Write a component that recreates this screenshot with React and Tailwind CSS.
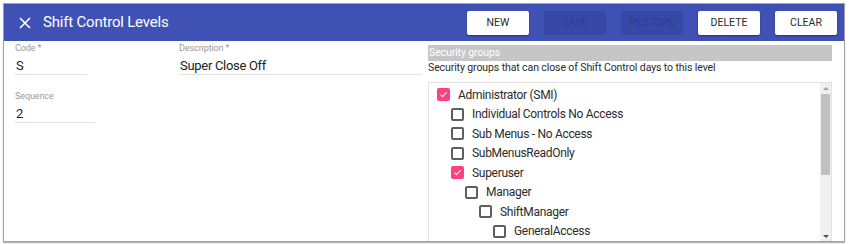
import React from "react";

const rows = [
  { label: "Administrator (SMI)", level: 0, checked: true },
  { label: "Individual Controls No Access", level: 1 },
  { label: "Sub Menus - No Access", level: 1 },
  { label: "SubMenusReadOnly", level: 1 },
  { label: "Superuser", level: 1, checked: true },
  { label: "Manager", level: 2 },
  { label: "ShiftManager", level: 3 },
  { label: "GeneralAccess", level: 4 },
];

function Checkbox({ checked }) {
  if (checked) {
    return (
      <div className="w-[13px] h-[13px] rounded-[2px] bg-[#ff4081] flex items-center justify-center shrink-0">
        <svg width="9" height="9" viewBox="0 0 10 10">
          <path d="M1.8 5.2 L4 7.3 L8.3 2.6" fill="none" stroke="white" strokeWidth="1.2" />
        </svg>
      </div>
    );
  }
  return <div className="w-[13px] h-[13px] rounded-[2px] border-2 border-[#5f5f5f] shrink-0" />;
}

const indents = ["pl-[8px]", "pl-[22px]", "pl-[36px]", "pl-[50px]", "pl-[64px]"];

function Field({ label, value, width, className = "" }) {
  return (
    <div className={`${width} ${className}`}>
      <div className="text-[9px] leading-[11px] text-[#9a9a9a] tracking-[-0.1px]">{label}</div>
      <div className="mt-[4px] text-[13px] leading-[16px] text-[#222] border-b border-[#e2e2e2] pl-[1px] tracking-[-0.3px]">
        {value}
      </div>
    </div>
  );
}

function Btn({ children, disabled }) {
  return disabled ? (
    <div className="w-[62px] h-[24px] rounded-[2px] bg-[#3848a6] flex items-center justify-center text-[10.5px] text-[#2e3c93] uppercase">
      {children}
    </div>
  ) : (
    <div className="w-[62px] h-[24px] rounded-[2px] bg-white shadow-[0_1px_2px_rgba(0,0,0,0.35)] flex items-center justify-center text-[10.5px] text-[#2a2a2a] uppercase">
      {children}
    </div>
  );
}

export default function App() {
  return (
    <div
      className="w-[849px] h-[244px] bg-white pt-[3px] pl-[3px] pr-[4px] pb-[2px]"
      style={{ fontFamily: "Roboto, 'Liberation Sans', sans-serif" }}
    >
      <div className="h-full border border-[#a3a3a3] shadow-[0_1px_1px_rgba(0,0,0,0.3)] flex flex-col overflow-hidden">
        <div className="h-[37px] bg-[#3f51b5] flex items-center pl-[15px] pr-[7px] shrink-0">
          <svg width="12" height="12" viewBox="0 0 12 12" className="shrink-0">
            <path d="M1 1 L11 11 M11 1 L1 11" stroke="white" strokeWidth="1.6" />
          </svg>
          <div className="ml-[12px] text-[15px] text-white tracking-[-0.2px]">Shift Control Levels</div>
          <div className="ml-auto flex items-center gap-[15px] pt-[1px]">
            <Btn>New</Btn>
            <Btn disabled>Save</Btn>
            <Btn disabled>Restore</Btn>
            <Btn>Delete</Btn>
            <Btn>Clear</Btn>
          </div>
        </div>
        <div className="flex-1 flex min-h-0">
          <div className="w-[424px] pl-[11px] pt-[2px] shrink-0">
            <div className="flex">
              <Field label="Code *" value="S" width="w-[72px]" />
              <Field label="Description *" value="Super Close Off" width="w-[243px]" className="ml-[92px]" />
            </div>
            <Field label="Sequence" value="2" width="w-[80px]" className="mt-[16px]" />
          </div>
          <div className="w-[404px] flex flex-col pt-[4px] shrink-0">
            <div className="h-[16px] bg-[#c6c6c6] text-white text-[10.5px] leading-[16px] pl-[1px] tracking-[-0.1px]">
              Security groups
            </div>
            <div className="text-[10.5px] leading-[14px] text-[#2a2a2a] tracking-[-0.1px]">
              Security groups that can close of Shift Control days to this level
            </div>
            <div className="mt-[7px] flex-1 min-h-0 border-t border-l border-r border-[#e3e3e3] flex overflow-hidden">
              <div className="flex-1 pt-[2px] overflow-hidden">
                {rows.map((r) => (
                  <div key={r.label} className={`h-[19.5px] flex items-center ${indents[r.level]}`}>
                    <Checkbox checked={r.checked} />
                    <span className="ml-[8px] text-[12px] text-[#2b2b2b] tracking-[-0.3px] whitespace-nowrap">
                      {r.label}
                    </span>
                  </div>
                ))}
              </div>
              <div className="w-[11px] bg-[#f1f1f1] flex flex-col items-center shrink-0">
                <div className="h-[11px] flex items-center justify-center">
                  <div className="w-0 h-0 border-l-[3px] border-r-[3px] border-b-[3px] border-l-transparent border-r-transparent border-b-[#a3a3a3]" />
                </div>
                <div className="w-[9px] h-[81px] bg-[#c1c1c1]" />
                <div className="flex-1" />
                <div className="h-[8px] flex items-start justify-center pt-[2px]">
                  <div className="w-0 h-0 border-l-[3px] border-r-[3px] border-t-[3px] border-l-transparent border-r-transparent border-t-[#505050]" />
                </div>
              </div>
            </div>
          </div>
        </div>
      </div>
    </div>
  );
}
